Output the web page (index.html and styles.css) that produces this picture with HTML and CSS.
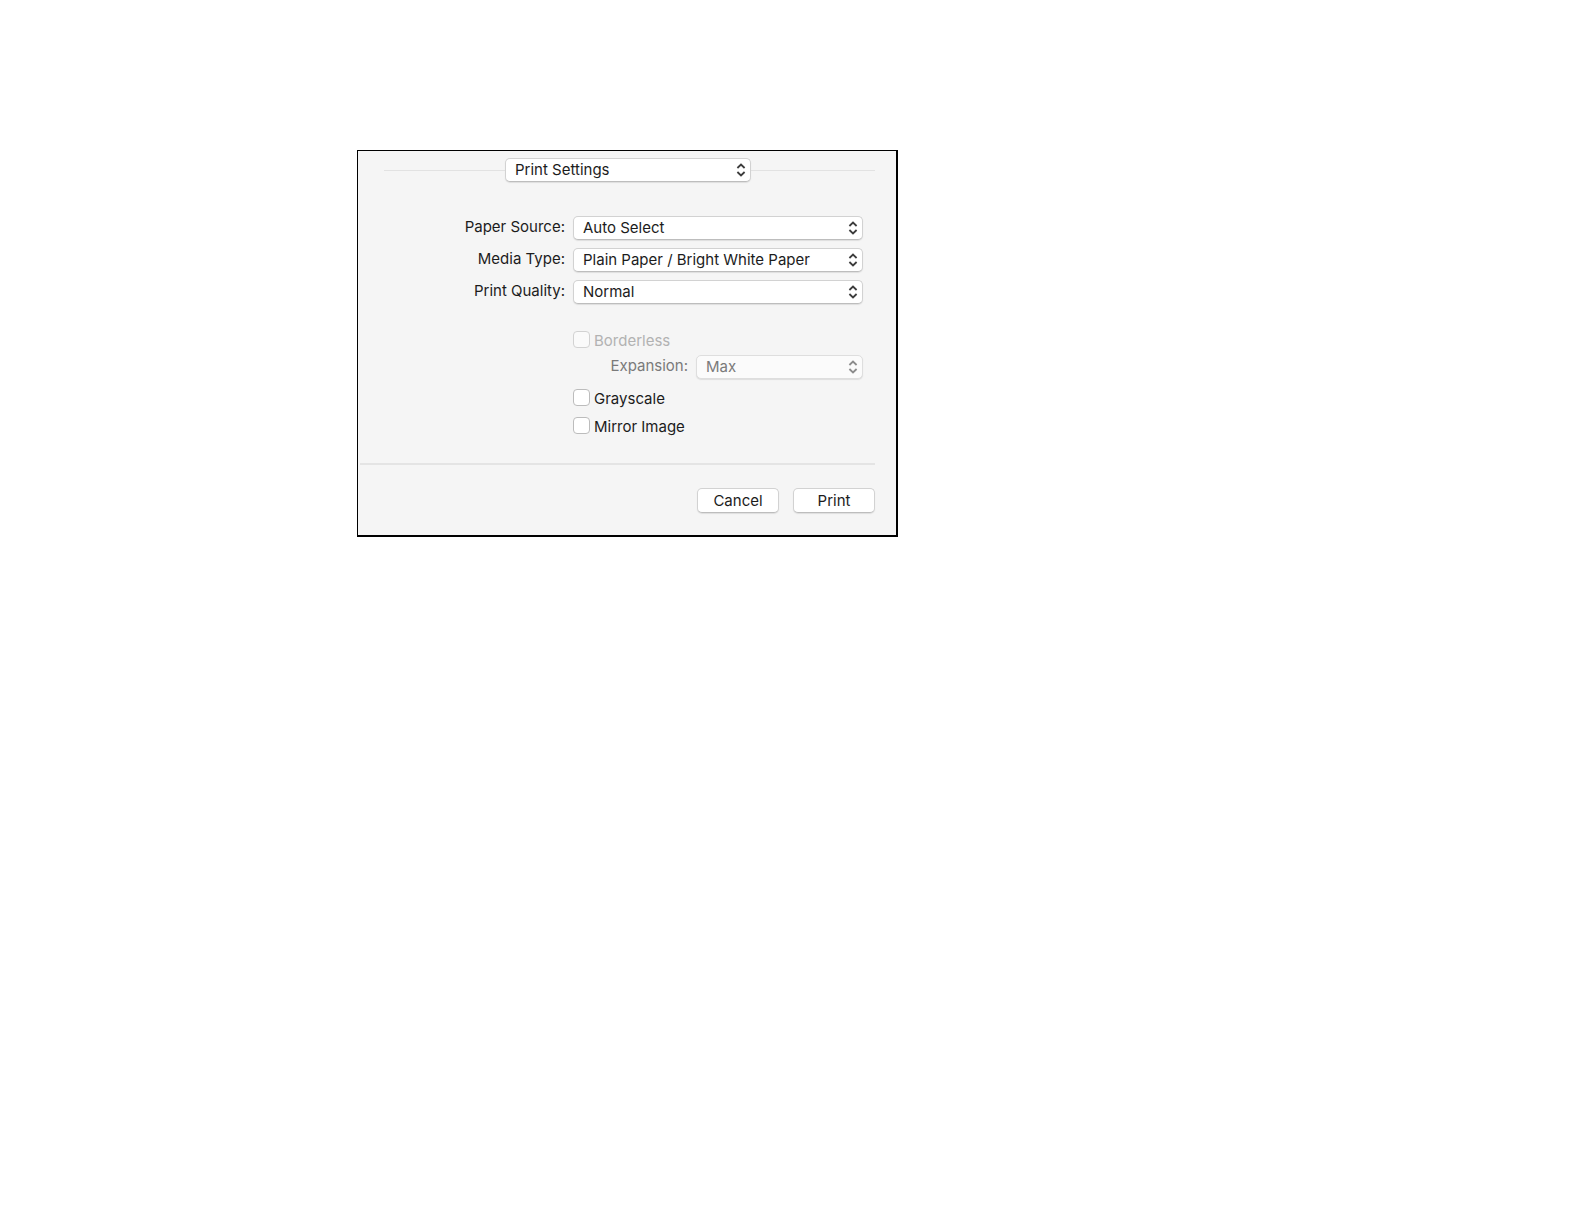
FILE: index.html
```html
<!DOCTYPE html>
<html lang="en">
<head>
<meta charset="utf-8">
<title>Print Settings</title>
<link rel="stylesheet" href="styles.css">
</head>
<body>
<svg class="defs" aria-hidden="true">
  <symbol id="arrows" viewBox="0 0 10 14">
    <path d="M1.4 5 5 1.6 8.6 5M1.4 9 5 12.4 8.6 9" fill="none" stroke="currentColor" stroke-width="1.8"/>
  </symbol>
</svg>
<main class="page">
  <form class="dialog">
    <div class="pane">
      <span class="rule"></span>
      <span class="popup">
        <select aria-label="Settings pane"><option>Print Settings</option></select>
        <svg class="arrows"><use href="#arrows"/></svg>
      </span>
      <span class="rule"></span>
    </div>

    <div class="fields">
      <label for="source">Paper Source:</label>
      <span class="popup">
        <select id="source"><option>Auto Select</option></select>
        <svg class="arrows"><use href="#arrows"/></svg>
      </span>
      <label for="media">Media Type:</label>
      <span class="popup">
        <select id="media"><option>Plain Paper / Bright White Paper</option></select>
        <svg class="arrows"><use href="#arrows"/></svg>
      </span>
      <label for="quality">Print Quality:</label>
      <span class="popup">
        <select id="quality"><option>Normal</option></select>
        <svg class="arrows"><use href="#arrows"/></svg>
      </span>
    </div>

    <div class="options">
      <label class="check check-off"><input type="checkbox" disabled>Borderless</label>
      <div class="expansion">
        <label for="expansion">Expansion:</label>
        <span class="popup">
          <select id="expansion" disabled><option>Max</option></select>
          <svg class="arrows"><use href="#arrows"/></svg>
        </span>
      </div>
      <label class="check"><input type="checkbox">Grayscale</label>
      <label class="check"><input type="checkbox">Mirror Image</label>
    </div>

    <div class="actions">
      <button type="button">Cancel</button>
      <button type="submit">Print</button>
    </div>
  </form>
</main>
</body>
</html>
```
FILE: styles.css
```css
* {
  box-sizing: border-box;
}

body {
  margin: 0;
  background: #fff;
  color: #1c1c1c;
  font: 400 15px/20px Inter, "Liberation Sans", sans-serif;
}

.defs {
  display: none;
}

.page {
  padding: 150px 24px 24px 357px;
}

.dialog {
  max-width: 541px;
  padding: 7px 21px 22px 2px;
  border: solid #000;
  border-width: 1px 2px 2px 1px;
  background: #f5f5f5;
}

.pane {
  display: grid;
  grid-template-columns: 121px 246px 1fr;
  align-items: center;
  padding-left: 24px;
}

.rule {
  height: 1px;
  background: #e2e2e2;
}

.popup {
  display: flex;
  align-items: center;
  position: relative;
}

select,
button {
  border: 1px solid #d2d2d2;
  border-bottom-color: #bdbdbd;
  border-radius: 5px;
  background: #fff;
  box-shadow: 0 1px 1px #dedede;
  color: inherit;
  font: inherit;
}

select {
  width: 100%;
  height: 24px;
  padding: 0 24px 0 9px;
  appearance: none;
}

.arrows {
  position: absolute;
  right: 5px;
  width: 10px;
  height: 14px;
  color: #3c3c3c;
  pointer-events: none;
}

.fields {
  display: grid;
  grid-template-columns: 1fr 290px;
  gap: 8px;
  margin-top: 34px;
  padding-right: 12px;
}

.fields label,
.expansion label {
  padding-top: 1px;
  text-align: right;
}

.options {
  display: flex;
  flex-direction: column;
  gap: 8px;
  width: 290px;
  margin: 27px 12px 0 auto;
}

.check {
  display: flex;
  align-items: flex-start;
  gap: 4px;
}

.check input {
  width: 17px;
  height: 17px;
  margin: 0;
  border: 1px solid #bcbcbc;
  border-radius: 4px;
  background: #fff;
  appearance: none;
}

.check-off {
  color: #b2b2b2;
}

.check-off input {
  border-color: #d2d2d2;
  background: #fafafa;
}

.expansion {
  display: grid;
  grid-template-columns: 1fr 167px;
  gap: 8px;
  margin: -4px 0 2px;
  color: #7a7a7a;
}

.expansion select {
  border-color: #dedede;
  background: #fbfbfb;
  opacity: 1;
}

.expansion .arrows {
  color: #8c8c8c;
}

.actions {
  display: flex;
  justify-content: flex-end;
  gap: 14px;
  margin-top: 26px;
  padding-top: 23px;
  border-top: 2px solid #e4e4e4;
}

.actions button {
  width: 82px;
  height: 25px;
  padding: 0;
}
```
